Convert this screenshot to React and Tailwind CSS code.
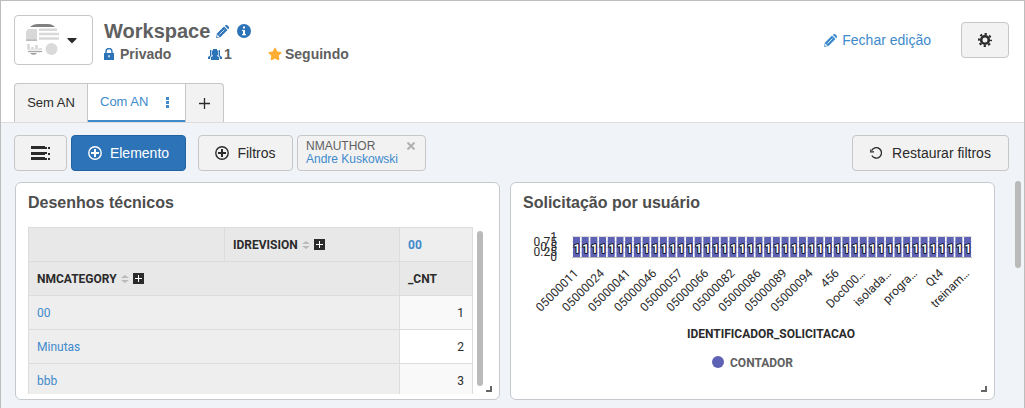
import { FaCaretDown, FaStar } from "react-icons/fa";

const rows = [
  { name: "00", count: 1 },
  { name: "Minutas", count: 2 },
  { name: "bbb", count: 3 },
];

const ticks = [
  "05000011",
  "05000024",
  "05000041",
  "05000046",
  "05000057",
  "05000066",
  "05000082",
  "05000086",
  "05000089",
  "05000094",
  "456",
  "Doc000…",
  "isolada…",
  "progra…",
  "Qt4",
  "treinam…",
];

const BAR_COUNT = 46;
const BAR_STEP = 8.69;

const Pencil = ({ className }) => (
  <svg viewBox="0 0 13 13" className={className} fill="currentColor" aria-hidden="true">
    <path d="M0 13l1-4.5L8 1.5 11.5 5l-7 7z" />
    <path d="M8.8.8l1-.8H11l2 2v1.2l-.8 1z" />
    <path d="M3.5 9.5l5-5" stroke="#fff" strokeWidth=".8" fill="none" />
    <path d="M1.2 9.5l2.3 2.3-2.3.2z" fill="#fff" />
  </svg>
);

const CirclePlus = () => (
  <svg viewBox="0 0 14 14" className="h-3.5 w-3.5" fill="none" stroke="currentColor" aria-hidden="true">
    <circle cx="7" cy="7" r="6.2" strokeWidth="1.4" />
    <path d="M7 3v8M3 7h8" strokeWidth="2" />
  </svg>
);

const SortIcon = () => (
  <svg viewBox="0 0 8 8" className="h-2 w-2" fill="#bababa" aria-hidden="true">
    <path d="M0 3l4-3 4 3zM0 5h8L4 8z" />
  </svg>
);

const ExpandButton = ({ label }) => (
  <button aria-label={label}>
    <svg viewBox="0 0 11 11" className="h-[11px] w-[11px]" aria-hidden="true">
      <path d="M0 0h11v11H0z" fill="#2b2b2b" />
      <path d="M5.5 2v7M2 5.5h7" stroke="#fff" />
    </svg>
  </button>
);

const ResizeHandle = () => (
  <svg viewBox="0 0 6 6" className="absolute right-[7px] bottom-[7px] h-[6px] w-[6px]" aria-hidden="true">
    <path d="M4 0h2v6H0V4h4z" fill="#666" />
  </svg>
);

const Header = () => (
  <header className="flex items-start pt-[14px] pr-[15px] pl-[13px]">
    <button className="flex h-[50px] w-[79px] items-center justify-center gap-2 rounded border border-[#c6c6c6] bg-white pr-1 text-[#2b2b2b]" aria-label="Workspace">
      <svg viewBox="0 0 33 32" className="h-8 w-[33px]" aria-hidden="true">
        <path d="M4 3c2-2 5-3 8-3h10c3 0 5 1 7 3z" fill="#808080" />
        <path d="M0 16V9c0-2 1-4 3-4h8v11z" fill="#d8d8d8" />
        <path d="M0 16.2h11" stroke="#bbb" strokeWidth="1.6" />
        <path d="M13 5.7h18M13 10h20M13 14.5h20" stroke="#d8d8d8" strokeWidth="2.4" />
        <circle cx="25.5" cy="25" r="6" fill="#dadada" />
        <path d="M2.5 20v5M6.5 23v2M10.5 21v4M14.5 24v1.5" stroke="#d4d4d4" strokeWidth="2.4" />
        <path d="M1 25.2h15" stroke="#ddd" />
        <path d="M2 27.5h14" stroke="#aaa" strokeWidth="1.4" />
        <path d="M4 29.2h7l-2 1.3H6z" fill="#808080" />
      </svg>
      <FaCaretDown className="h-4 w-2.5" />
    </button>

    <div className="ml-[11px] pt-1 font-bold text-[#606060]">
      <div className="flex items-center">
        <h1 className="text-xl leading-6">Workspace</h1>
        <button className="ml-1.5 text-[#2d73b7]" aria-label="Editar">
          <Pencil className="h-[13px] w-[13px]" />
        </button>
        <button className="ml-2" aria-label="Info">
          <svg viewBox="0 0 14 14" className="h-3.5 w-3.5" aria-hidden="true">
            <circle cx="7" cy="7" r="7" fill="#2d73b7" />
            <path d="M6 2.5h2v2H6zM5 6h3v4h1v1.3H5V10h1V7H5z" fill="#fff" />
          </svg>
        </button>
      </div>
      <div className="flex items-center text-sm leading-[22px]">
        <span className="flex w-[104px] items-center gap-1.5">
          <svg viewBox="0 0 10 12" className="h-3 w-2.5" aria-hidden="true">
            <path d="M2 5V3.5a3 3 0 016 0V5" fill="none" stroke="#2d73b7" strokeWidth="1.4" />
            <path d="M0 5h10v7H0z" fill="#2d73b7" />
            <path d="M4.3 7.3h1.4v2H4.3z" fill="#fff" />
          </svg>
          Privado
        </span>
        <span className="flex w-[60px] items-center gap-0.5">
          <svg viewBox="0 0 14 11" className="h-[11px] w-3.5" fill="#2d73b7" aria-hidden="true">
            <path d="M5 0h4v1l1 1v3.5L9 7l2 1v3H3V8l2-1-1-1.5V2l1-1z" />
            <path d="M2 1h1.4v5.5L2.2 8v2H0V8l2-1.5zM12 1h-1.4v5.5L11.8 8v2H14V8l-2-1.5z" />
          </svg>
          1
        </span>
        <span className="flex items-center gap-[3px]">
          <FaStar className="h-3.5 w-3.5 text-[#ffad33]" />
          Seguindo
        </span>
      </div>
    </div>

    <div className="mt-[7px] ml-auto flex items-center gap-[30px]">
      <a href="#" className="flex items-center gap-[5px] text-sm text-[#3e8acc]">
        <Pencil className="h-[13px] w-[13px]" />
        Fechar edição
      </a>
      <button className="flex h-9 w-12 items-center justify-center rounded-sm border border-[#c6c6c6] bg-[#f2f2f2]" aria-label="Configurações">
        <svg viewBox="0 0 14 14" className="h-3.5 w-3.5" fill="none" stroke="#2b2b2b" aria-hidden="true">
          <circle cx="7" cy="7" r="3.8" strokeWidth="2.6" />
          <circle cx="7" cy="7" r="6" strokeWidth="2" strokeDasharray="2.3 2.41" strokeDashoffset="1.15" />
        </svg>
      </button>
    </div>
  </header>
);

const Tabs = () => (
  <nav className="mt-[18px] flex h-10 border-b border-[#dcdcdc] pl-[13px] text-[13px]">
    <button className="w-[74px] rounded-tl border border-b-0 border-[#c6c6c6] bg-[#f2f2f2] text-[#2b2b2b]">Sem AN</button>
    <button className="flex w-[97px] items-center justify-between border-t border-t-[#c6c6c6] border-b-2 border-b-[#3e8acc] pr-4 pl-3 text-[#3e8acc]">
      Com AN
      <svg viewBox="0 0 3 11" className="h-[11px] w-[3px]" fill="currentColor" aria-hidden="true">
        <path d="M0 0h3v3H0zM0 4h3v3H0zM0 8h3v3H0z" />
      </svg>
    </button>
    <button className="flex w-[39px] items-center justify-center rounded-tr border border-b-0 border-[#c6c6c6] bg-[#f2f2f2]" aria-label="Nova aba">
      <svg viewBox="0 0 11 11" className="h-[11px] w-[11px]" stroke="#2b2b2b" strokeWidth="1.3" aria-hidden="true">
        <path d="M5.5 0v11M0 5.5h11" />
      </svg>
    </button>
  </nav>
);

const Toolbar = () => (
  <div className="flex pt-3 pr-[15px] pl-[13px] text-sm text-[#2b2b2b]">
    <button className="flex h-9 w-[53px] items-center justify-center rounded-sm border border-[#c6c6c6] bg-[#f2f2f2]" aria-label="Menu">
      <svg viewBox="0 0 19 14" className="h-3.5 w-[19px]" fill="#2b2b2b" aria-hidden="true">
        <path d="M0 0h14v3H0zM0 6h14v3H0zM0 11h14v3H0z" />
        <path d="M14 1h2v2h-2zM17 1h2v2h-2zM14 6h2v2h-2zM17 7h2v2h-2zM14 12h2v2h-2zM17 12h2v2h-2z" />
      </svg>
    </button>
    <button className="ml-1 flex h-9 w-[115px] items-center justify-center gap-2 rounded-sm border border-[#22629f] bg-[#2d73b7] text-white">
      <CirclePlus />
      Elemento
    </button>
    <button className="ml-3 flex h-9 w-[95px] items-center justify-center gap-2 rounded-sm border border-[#c6c6c6] bg-[#f2f2f2]">
      <CirclePlus />
      Filtros
    </button>
    <div className="ml-1 flex h-9 w-[129px] items-start justify-between rounded-sm border border-[#c6c6c6] bg-[#f2f2f2] pt-1 pr-2.5 pl-2 text-xs leading-[13px]">
      <div className="whitespace-nowrap">
        <div className="text-[#606060]">NMAUTHOR</div>
        <a href="#" className="block text-[#3e8acc]">Andre Kuskowski</a>
      </div>
      <button className="-ml-3 pt-0.5" aria-label="Remover filtro">
        <svg viewBox="0 0 8 8" className="h-2 w-2" stroke="#b0b0b0" strokeWidth="2" aria-hidden="true">
          <path d="M.5.5l7 7M7.5.5l-7 7" />
        </svg>
      </button>
    </div>
    <button className="ml-auto flex h-9 w-[157px] items-center justify-center gap-2.5 rounded-sm border border-[#c6c6c6] bg-[#f2f2f2]">
      <svg viewBox="0 0 12 12" className="h-3 w-3" fill="none" stroke="currentColor" strokeWidth="1.3" aria-hidden="true">
        <path d="M1.5 3.8A5.2 5.2 0 111.8 8.5" />
        <path d="M0 2v2.8h4" />
      </svg>
      Restaurar filtros
    </button>
  </div>
);

const Card = ({ title, children }) => (
  <section className="relative h-[218px] rounded-md border border-[#c6cace] bg-white pl-3">
    <h2 className="pt-2 text-base leading-6 font-bold text-[#4d4d4d]">{title}</h2>
    {children}
    <ResizeHandle />
  </section>
);

const PivotTable = () => (
  <div className="mt-3 flex gap-1 pr-4">
    <div className="h-[167px] flex-1 overflow-hidden font-['Roboto',sans-serif] text-xs text-[#2b2b2b]">
      <table className="w-full table-fixed border-collapse [&_td]:h-[34px] [&_td]:border [&_td]:border-[#dcdcdc] [&_td]:px-2 [&_th]:h-[34px] [&_th]:border [&_th]:border-[#dcdcdc] [&_th]:px-2 [&_th]:text-left">
        <colgroup>
          <col className="w-[196px]" />
          <col />
          <col className="w-[73px]" />
        </colgroup>
        <thead>
          <tr className="bg-[#e8e8e8]">
            <th></th>
            <th>
              <div className="flex items-center gap-1">
                IDREVISION
                <SortIcon />
                <ExpandButton label="Expandir IDREVISION" />
              </div>
            </th>
            <th className="bg-[#eee] text-[#3e8acc]">00</th>
          </tr>
          <tr className="bg-[#e8e8e8]">
            <th colSpan={2}>
              <div className="flex items-center gap-1">
                NMCATEGORY
                <SortIcon />
                <ExpandButton label="Expandir NMCATEGORY" />
              </div>
            </th>
            <th>_CNT</th>
          </tr>
        </thead>
        <tbody>
          {rows.map((row) => (
            <tr key={row.name} className="bg-white odd:bg-[#f9f9f9]">
              <td colSpan={2} className="bg-[#eee] text-[#3e8acc]">{row.name}</td>
              <td className="text-right">{row.count}</td>
            </tr>
          ))}
        </tbody>
      </table>
    </div>
    <div className="mt-1 h-[155px] w-1.5 rounded-full bg-[#bababa]" />
  </div>
);

const BarChart = () => (
  <svg viewBox="0 -8 460 158" className="mt-3 w-[460px] max-w-full font-['Roboto',sans-serif]" fontSize="12" fill="#2b2b2b">
    {/* Y axis */}
    <g textAnchor="end">
      <text x="34" y="6">1</text>
      <text x="34" y="11">0.75</text>
      <text x="34" y="16">0.5</text>
      <text x="34" y="21">0.25</text>
      <text x="34" y="26">0</text>
    </g>
    <path d="M49 1.5h400M49 6.5h400M49 12.5h400M49 17.5h400" stroke="#dcdcdc" />
    {/* Bars */}
    {Array.from({ length: BAR_COUNT }, (_, i) => {
      const x = 50 + i * BAR_STEP;
      return (
        <g key={i}>
          <rect x={x} y="2" width="7" height="20" fill="#5d62b5" />
          <text x={x + 4} y="18" textAnchor="middle" fontWeight="bold" fill="#fff" stroke="#000" strokeWidth="1.6" strokeLinejoin="round" paintOrder="stroke">
            1
          </text>
        </g>
      );
    })}
    <path d="M49 22.5h400" stroke="#bababa" />
    {/* X axis */}
    {ticks.map((tick, i) => {
      const x = 56 + i * BAR_STEP * 3;
      return (
        <text key={tick} x={x} y="39" textAnchor="end" transform={`rotate(-45 ${x} 39)`}>
          {tick}
        </text>
      );
    })}
    <text x="248" y="103" textAnchor="middle" fontWeight="bold">IDENTIFICADOR_SOLICITACAO</text>
    {/* Legend */}
    <circle cx="195" cy="127" r="6" fill="#5d62b5" />
    <text x="207" y="132" fontWeight="bold" fill="#606060">CONTADOR</text>
  </svg>
);

const App = () => {
  return (
    <div className="flex min-h-screen flex-col border border-[#bdbdbd] bg-white font-['Liberation_Sans',Arial,sans-serif]">
      <Header />
      <Tabs />
      <div className="flex-1 bg-[#f0f3f8] pb-2">
        <Toolbar />
        <div className="mt-2.5 flex items-start pr-[3px] pl-3.5">
          <main className="mt-px grid flex-1 grid-cols-2 gap-2.5">
            <Card title="Desenhos técnicos">
              <PivotTable />
            </Card>
            <Card title="Solicitação por usuário">
              <BarChart />
            </Card>
          </main>
          <div className="ml-5 h-[87px] w-1.5 rounded-full bg-[#bababa]" />
        </div>
      </div>
    </div>
  );
};

export default App;
